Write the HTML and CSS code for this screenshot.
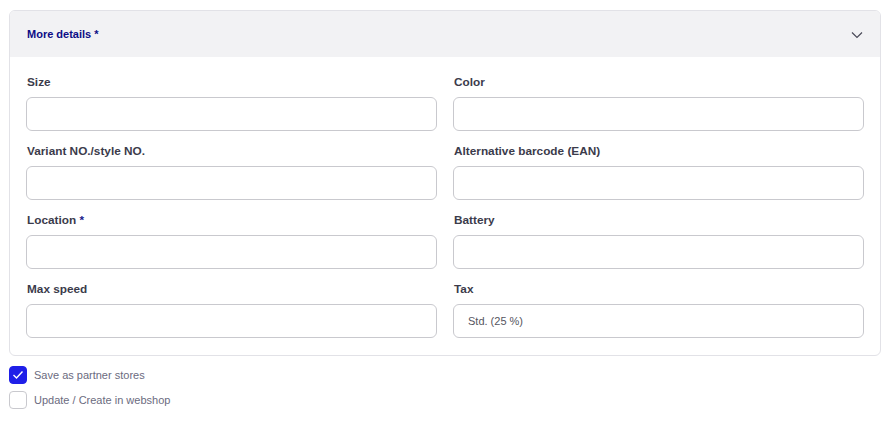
FILE: index.html
```
<html>
<head>
	<title>More details</title>
	<link rel="stylesheet" href="styles.css">
</head>
<body>
<div class="card">
	<div class="card-head">
		<span class="title">More details *</span>
		<svg class="chevron" width="12" height="8" viewBox="0 0 12 8"><path d="M1 1.5 L6 6.5 L11 1.5" fill="none" stroke="#4a4a58" stroke-width="1.2"/></svg>
	</div>
	<div class="card-body">
		<div class="field"><label>Size</label><div class="input"></div></div>
		<div class="field"><label>Color</label><div class="input"></div></div>
		<div class="field"><label>Variant NO./style NO.</label><div class="input"></div></div>
		<div class="field"><label>Alternative barcode (EAN)</label><div class="input"></div></div>
		<div class="field"><label>Location <span class="req">*</span></label><div class="input"></div></div>
		<div class="field"><label>Battery</label><div class="input"></div></div>
		<div class="field"><label>Max speed</label><div class="input"></div></div>
		<div class="field"><label>Tax</label><div class="input value">Std. (25 %)</div></div>
	</div>
</div>

<div class="checks">
	<div class="check"><span class="box on"><svg width="12" height="10" viewBox="0 0 12 10"><path d="M1.5 5 L4.5 8 L10.5 1.5" fill="none" stroke="#fff" stroke-width="1.4"/></svg></span>Save as partner stores</div>
	<div class="check"><span class="box"></span>Update / Create in webshop</div>
</div>
</body>
</html>
```
FILE: styles.css
```
body {margin:0; padding:10px 8px 10px 9px; font-family:"Liberation Sans", Arial, sans-serif; background:#fff;}
.card {border:1px solid #e2e2e7; border-radius:6px; overflow:hidden;}
.card-head {height:46px; background:#f2f2f4; display:flex; align-items:center; justify-content:space-between; padding:0 17px 0 17px;}
.title {font-size:11px; font-weight:bold; color:#0c0c86;}
.chevron {display:block; margin-top:1px;}
.card-body {padding:17px 16px 17px 16px; display:grid; grid-template-columns:1fr 1fr; column-gap:16px; row-gap:12px;}
.field label {display:block; font-size:11.8px; line-height:17px; font-weight:bold; color:#3b3b4b; margin-bottom:6px; padding-left:1px;}
.req {color:#1a1a8a;}
.input {height:32px; border:1px solid #c9c9ce; border-radius:6px; background:#fff;}
.input.value {font-size:11px; color:#555560; line-height:32px; padding-left:14px;}
.checks {margin-top:10px;}
.check {display:flex; align-items:center; font-size:11px; color:#6b6b80; height:18px; margin-bottom:7px;}
.box {width:16px; height:16px; border:1px solid #c9c9ce; border-radius:4px; margin-right:7px; display:flex; align-items:center; justify-content:center;}
.box.on {background:#1f1fe8; border-color:#1f1fe8;}
```
